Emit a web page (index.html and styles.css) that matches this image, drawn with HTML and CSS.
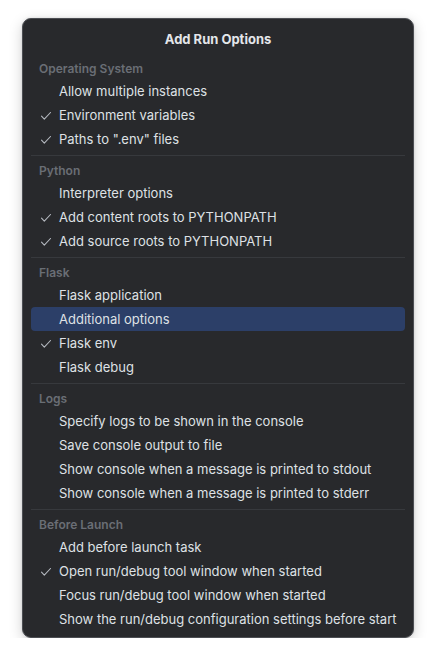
FILE: index.html
```html
<!DOCTYPE html>
<html>
<head>
<meta charset="utf-8">
<link rel="stylesheet" href="styles.css">
</head>
<body>
<div class="popup">
  <div class="title">Add Run Options</div>

  <div class="section">
    <div class="header">Operating System</div>
    <div class="item"><span class="check"></span><span>Allow multiple instances</span></div>
    <div class="item"><span class="check"><svg viewBox="0 0 10 8" width="10" height="8"><polyline points="0.5,4.2 3.3,7.2 9.5,0.5"/></svg></span><span>Environment variables</span></div>
    <div class="item"><span class="check"><svg viewBox="0 0 10 8" width="10" height="8"><polyline points="0.5,4.2 3.3,7.2 9.5,0.5"/></svg></span><span>Paths to ".env" files</span></div>
  </div>
  <div class="sep"></div>

  <div class="section">
    <div class="header">Python</div>
    <div class="item"><span class="check"></span><span>Interpreter options</span></div>
    <div class="item"><span class="check"><svg viewBox="0 0 10 8" width="10" height="8"><polyline points="0.5,4.2 3.3,7.2 9.5,0.5"/></svg></span><span>Add content roots to PYTHONPATH</span></div>
    <div class="item"><span class="check"><svg viewBox="0 0 10 8" width="10" height="8"><polyline points="0.5,4.2 3.3,7.2 9.5,0.5"/></svg></span><span>Add source roots to PYTHONPATH</span></div>
  </div>
  <div class="sep"></div>

  <div class="section">
    <div class="header">Flask</div>
    <div class="item"><span class="check"></span><span>Flask application</span></div>
    <div class="item selected"><span class="check"></span><span>Additional options</span></div>
    <div class="item"><span class="check"><svg viewBox="0 0 10 8" width="10" height="8"><polyline points="0.5,4.2 3.3,7.2 9.5,0.5"/></svg></span><span>Flask env</span></div>
    <div class="item"><span class="check"></span><span>Flask debug</span></div>
  </div>
  <div class="sep"></div>

  <div class="section">
    <div class="header">Logs</div>
    <div class="item"><span class="check"></span><span>Specify logs to be shown in the console</span></div>
    <div class="item"><span class="check"></span><span>Save console output to file</span></div>
    <div class="item"><span class="check"></span><span>Show console when a message is printed to stdout</span></div>
    <div class="item"><span class="check"></span><span>Show console when a message is printed to stderr</span></div>
  </div>
  <div class="sep"></div>

  <div class="section">
    <div class="header">Before Launch</div>
    <div class="item"><span class="check"></span><span>Add before launch task</span></div>
    <div class="item"><span class="check"><svg viewBox="0 0 10 8" width="10" height="8"><polyline points="0.5,4.2 3.3,7.2 9.5,0.5"/></svg></span><span>Open run/debug tool window when started</span></div>
    <div class="item"><span class="check"></span><span>Focus run/debug tool window when started</span></div>
    <div class="item"><span class="check"></span><span>Show the run/debug configuration settings before start</span></div>
  </div>
</div>
</body>
</html>
```

FILE: styles.css
```css
html, body {
  margin: 0;
  padding: 0;
  background: #ffffff;
}

body {
  padding: 18px 0 0 22px;
  font-family: Inter, "Noto Sans", "Liberation Sans", sans-serif;
  -webkit-font-smoothing: antialiased;
}

.popup {
  box-sizing: border-box;
  width: 392px;
  height: 620px;
  background: #28292c;
  border: 1px solid #4c4e53;
  border-radius: 9px;
  box-shadow: 0 4px 14px rgba(0, 0, 0, 0.18), 0 0 3px rgba(0, 0, 0, 0.12);
  padding: 0 8px 6px 8px;
  color: #dfe1e5;
  font-size: 13px;
}

.title {
  height: 40px;
  line-height: 40px;
  text-align: center;
  font-weight: 700;
  font-size: 13px;
  color: #e4e6ea;
}

.header {
  height: 20px;
  line-height: 20px;
  padding-left: 8px;
  font-size: 12px;
  font-weight: 600;
  color: #6a6e75;
}

.item {
  display: flex;
  align-items: center;
  height: 24px;
  padding-left: 10px;
  border-radius: 4px;
}

.item.selected {
  background: #2c3f68;
}

.check {
  width: 18px;
  flex: none;
  display: flex;
  align-items: center;
}

.check svg {
  display: block;
  margin-top: 1px;
}

.check polyline {
  fill: none;
  stroke: #b4b8bf;
  stroke-width: 1.1;
  stroke-linecap: round;
  stroke-linejoin: round;
}

.sep {
  height: 1px;
  background: #37393d;
  margin: 4px 0 5px 0;
}
```
